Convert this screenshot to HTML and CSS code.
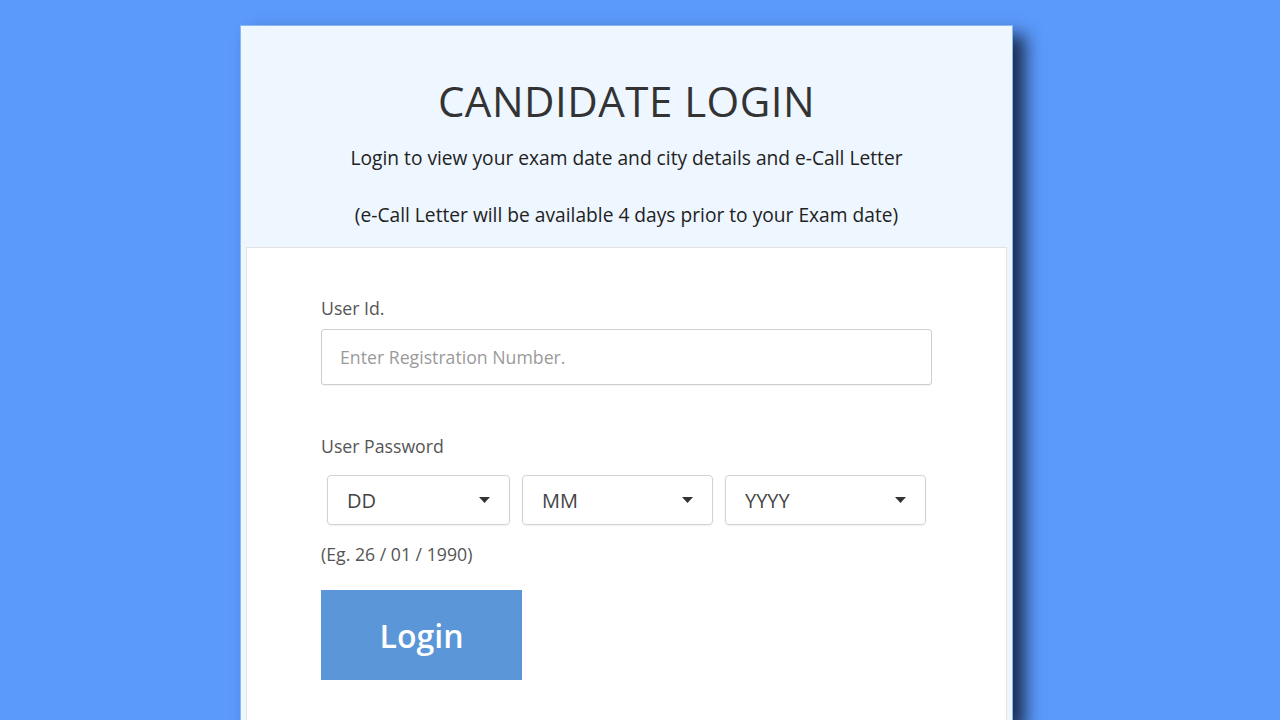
FILE: index.html
```html
<!DOCTYPE html>
<html lang="en">
<head>
  <meta charset="UTF-8">
  <meta name="viewport" content="width=device-width, initial-scale=1.0">
  <title>Candidate Login</title>
  <link rel="stylesheet" href="styles.css">
</head>
<body>

  <div class="login-card">
    <div class="login-head">
      <h1>CANDIDATE LOGIN</h1>
      <p>Login to view your exam date and city details and e-Call Letter</p>
      <p>(e-Call Letter will be available 4 days prior to your Exam date)</p>
    </div>

    <div class="login-body">
      <label for="userId">User Id.</label>
      <input type="text" id="userId" placeholder="Enter Registration Number.">

      <label class="pass-label">User Password</label>
      <div class="date-row">
        <div class="select-box dd">
          <span>DD</span>
          <svg width="11" height="6" viewBox="0 0 11 6"><path d="M0 0h11L5.5 6z" fill="#333"/></svg>
        </div>
        <div class="select-box mm">
          <span>MM</span>
          <svg width="11" height="6" viewBox="0 0 11 6"><path d="M0 0h11L5.5 6z" fill="#333"/></svg>
        </div>
        <div class="select-box yy">
          <span>YYYY</span>
          <svg width="11" height="6" viewBox="0 0 11 6"><path d="M0 0h11L5.5 6z" fill="#333"/></svg>
        </div>
      </div>
      <p class="hint">(Eg. 26 / 01 / 1990)</p>

      <button class="login-btn">Login</button>
    </div>
  </div>

</body>
</html>
```

FILE: styles.css
```css
body {
  margin: 0;
  background-color: #5b9afb;
  font-family: 'Open Sans', sans-serif;
  height: 720px;
  overflow: hidden;
}

.login-card {
  width: 771px;
  margin: 25px 0 0 240px;
  background-color: #eef6ff;
  border: 1px solid #8db8f6;
  border-bottom: none;
  box-shadow: 12px 10px 16px rgba(15, 25, 50, 0.85);
  height: 695px;
  overflow: hidden;
}

.login-head {
  text-align: center;
  padding-top: 49px;
  height: 169px;
  box-sizing: border-box;
}

.login-head h1 {
  margin: 0 0 18px;
  font-size: 42px;
  font-weight: 400;
  color: #333;
  letter-spacing: 0.5px;
  line-height: 52px;
}

.login-head p {
  margin: 0 0 32px;
  font-size: 19.2px;
  color: #222;
  line-height: 25px;
}

.login-body {
  margin: 52px 5px 0;
  height: 600px;
  background-color: #fff;
  border: 1px solid #e2e2e2;
  padding: 49px 0 0 74px;
  box-sizing: border-box;
}

label {
  display: block;
  font-size: 17.7px;
  color: #555;
  line-height: 22px;
  margin-bottom: 10px;
}

input[type="text"] {
  display: block;
  width: 611px;
  height: 56px;
  box-sizing: border-box;
  padding: 0 18px;
  border: 1px solid #cfcfcf;
  border-radius: 3px;
  font-family: 'Open Sans', sans-serif;
  font-size: 17.7px;
  color: #333;
  box-shadow: 0 1px 1px rgba(0, 0, 0, 0.05);
}

input::placeholder {
  color: #9a9a9a;
}

.pass-label {
  margin-top: 50px;
  margin-bottom: 18px;
}

.date-row {
  display: flex;
  padding-left: 6px;
}

.select-box {
  height: 50px;
  box-sizing: border-box;
  border: 1px solid #d2d2d2;
  border-radius: 4px;
  display: flex;
  align-items: center;
  justify-content: space-between;
  padding: 0 19px 0 19px;
  font-size: 20px;
  color: #444;
  box-shadow: 0 1px 2px rgba(0, 0, 0, 0.06);
}

.select-box.dd {
  width: 183px;
  margin-right: 12px;
}

.select-box.mm {
  width: 191px;
  margin-right: 12px;
}

.select-box.yy {
  width: 201px;
}

.hint {
  margin: 17px 0 24px;
  font-size: 17.7px;
  color: #555;
  line-height: 24px;
}

.login-btn {
  width: 201px;
  height: 90px;
  background-color: #5a96d8;
  color: white;
  border: none;
  font-family: 'Open Sans', sans-serif;
  font-size: 32px;
  font-weight: 600;
  cursor: pointer;
}
```
